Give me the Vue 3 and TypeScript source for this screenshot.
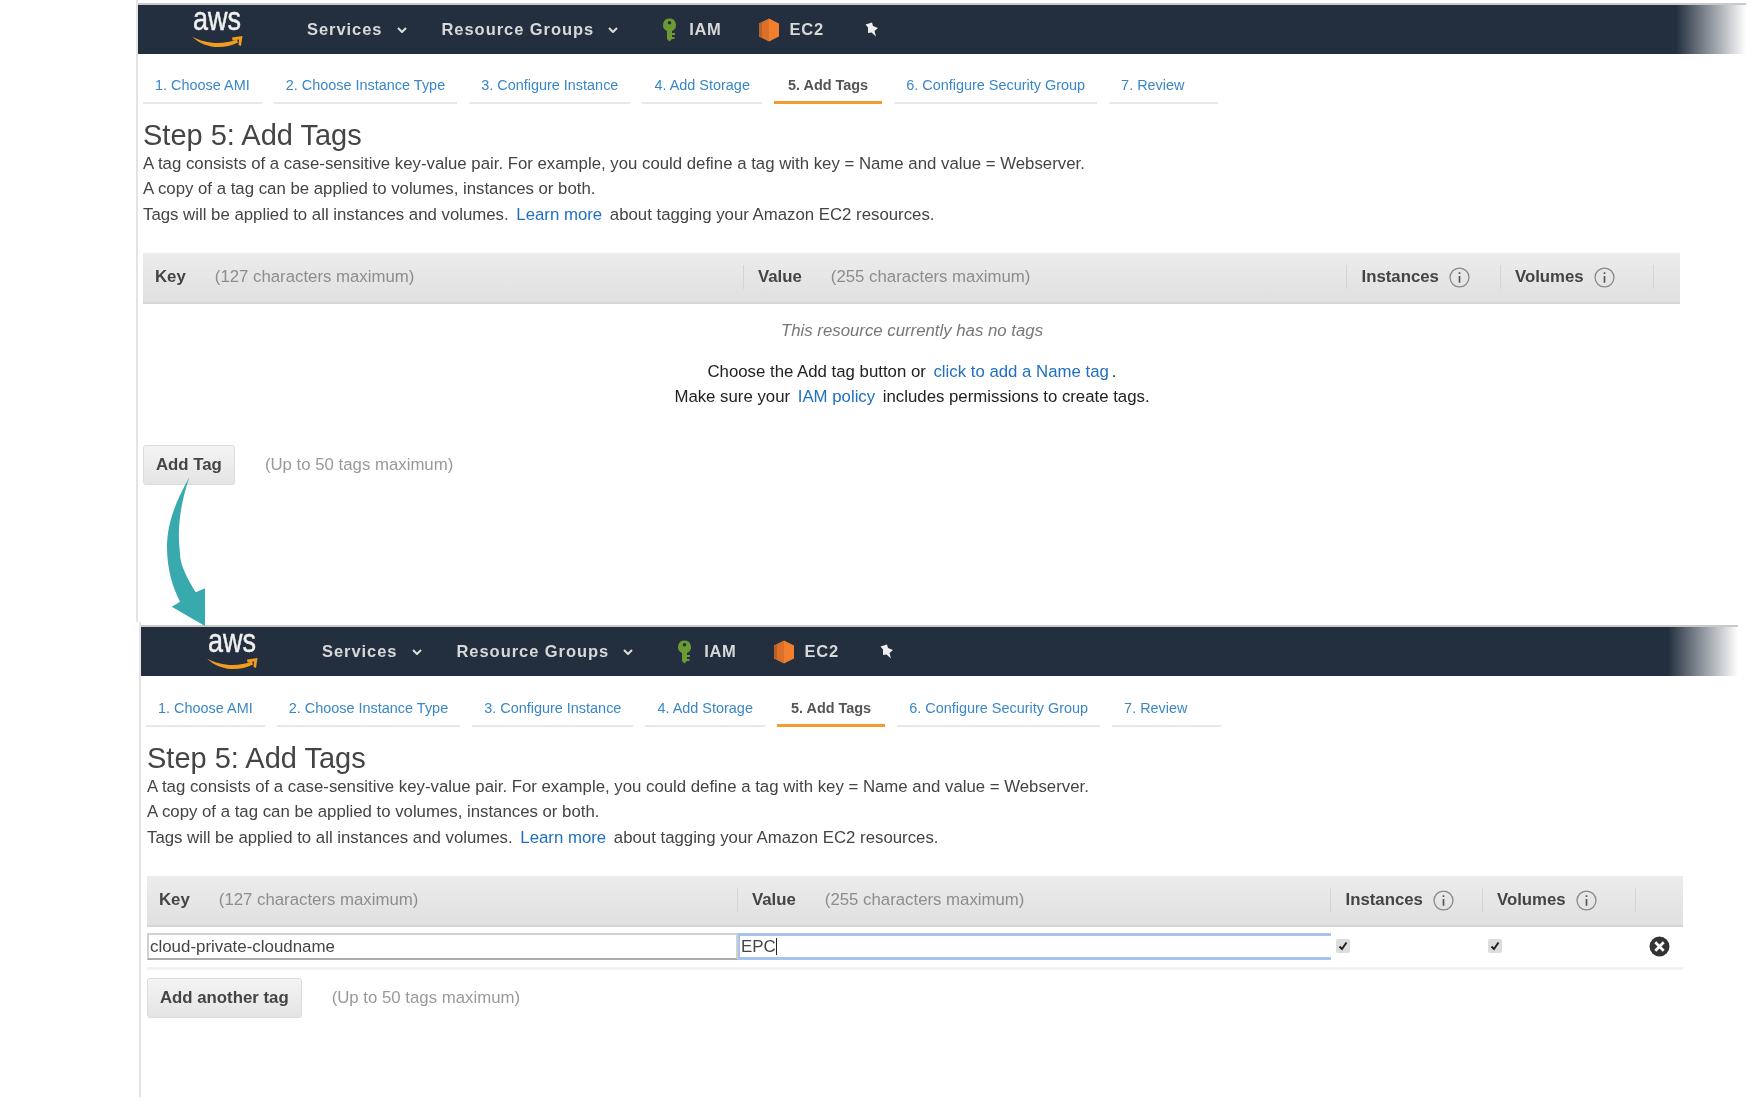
<script setup lang="ts">
const tabs = [
  '1. Choose AMI',
  '2. Choose Instance Type',
  '3. Configure Instance',
  '4. Add Storage',
  '5. Add Tags',
  '6. Configure Security Group',
  '7. Review',
]
const panels = ['first', 'second']
</script>

<template>
  <div class="page">
    <section v-for="p in panels" :key="p" class="panel" :class="p">
      <header class="nav">
        <div class="logo">
          <span class="aws">aws</span>
          <svg class="smile" viewBox="0 0 52 13" width="52" height="13">
            <path d="M0 0.5C13 8 31 9 45 3.5L46 6.5C31 14 12 12.5 0 0.5Z" fill="#f29c1f" />
            <path d="M40 1.5L50.5 0L49 10L46.5 9L47 3.5L40.5 4.5Z" fill="#f29c1f" />
          </svg>
        </div>
        <span class="nav-item services">Services</span>
        <svg class="chev" viewBox="0 0 10 6" width="10" height="6"><path d="M1 1L5 5L9 1" fill="none" stroke="#ddd" stroke-width="2" /></svg>
        <span class="nav-item groups">Resource Groups</span>
        <svg class="chev" viewBox="0 0 10 6" width="10" height="6"><path d="M1 1L5 5L9 1" fill="none" stroke="#ddd" stroke-width="2" /></svg>
        <svg class="key" viewBox="0 0 15 24" width="15" height="24">
          <path fill-rule="evenodd" d="M7.5 0.5A6.5 6.5 0 0 1 10 13V15H13V17H10V19H12.5V21H10L7.5 23.5L5 21V13A6.5 6.5 0 0 1 7.5 0.5ZM7.5 3A1.8 1.8 0 1 0 7.5 6.6A1.8 1.8 0 1 0 7.5 3Z" fill="#6b9a35" />
        </svg>
        <span class="nav-item iam">IAM</span>
        <svg class="hex" viewBox="0 0 22 24" width="22" height="24">
          <path d="M11 0.5L21 5.5V18.5L11 23.5Z" fill="#f07f2e" />
          <path d="M11 0.5L1 5.5V18.5L11 23.5Z" fill="#dc7029" />
          <path d="M1 5.5L4 4V20L1 18.5Z" fill="#b8602b" />
        </svg>
        <span class="nav-item ec2">EC2</span>
        <svg class="pin" viewBox="0 0 16 17" width="16" height="17">
          <path d="M2.5 3.5L9 1.5L10 5L15 7L11.5 10L13 15.5L8.5 11.5L5 12L5 6.5Z" fill="#eee" />
        </svg>
      </header>

      <nav class="tabs">
        <a v-for="t in tabs" :key="t" class="tab" :class="{ active: t.startsWith('5'), last: t.startsWith('7') }">{{ t }}</a>
      </nav>

      <div class="content">
        <h1>Step 5: Add Tags</h1>
        <p>A tag consists of a case-sensitive key-value pair. For example, you could define a tag with key = Name and value = Webserver.</p>
        <p>A copy of a tag can be applied to volumes, instances or both.</p>
        <p>Tags will be applied to all instances and volumes. <a class="link">Learn more</a> about tagging your Amazon EC2 resources.</p>

        <div class="thead">
          <div class="th key-col"><b>Key</b><span>(127 characters maximum)</span></div>
          <div class="th val-col"><b>Value</b><span>(255 characters maximum)</span></div>
          <div class="th inst-col">
            <b>Instances</b>
            <svg class="info" viewBox="0 0 20 20" width="21" height="21"><circle cx="10" cy="10" r="9" fill="none" stroke="#888" stroke-width="1.2" /><path d="M10 8.5V15M10 5V6.6" stroke="#555" stroke-width="1.6" /></svg>
          </div>
          <div class="th vol-col">
            <b>Volumes</b>
            <svg class="info" viewBox="0 0 20 20" width="21" height="21"><circle cx="10" cy="10" r="9" fill="none" stroke="#888" stroke-width="1.2" /><path d="M10 8.5V15M10 5V6.6" stroke="#555" stroke-width="1.6" /></svg>
          </div>
          <div class="th end-col"></div>
        </div>

        <template v-if="p === 'first'">
          <div class="empty">
            <em>This resource currently has no tags</em>
            <div class="empty-line one">Choose the Add tag button or <a class="link">click to add a Name tag</a>.</div>
            <div class="empty-line">Make sure your <a class="link">IAM policy</a> includes permissions to create tags.</div>
          </div>
          <div class="actions first-actions">
            <button class="btn">Add Tag</button>
            <span class="limit">(Up to 50 tags maximum)</span>
          </div>
        </template>

        <template v-else>
          <div class="row">
            <div class="input plain">cloud-private-cloudname</div>
            <div class="input focus">EPC<i class="caret"></i></div>
            <div class="cell"><span class="check"><svg viewBox="0 0 12 12" width="12" height="12"><path d="M2.5 6.5L5 9L9.5 2.5" fill="none" stroke="#222" stroke-width="2" /></svg></span></div>
            <div class="cell"><span class="check"><svg viewBox="0 0 12 12" width="12" height="12"><path d="M2.5 6.5L5 9L9.5 2.5" fill="none" stroke="#222" stroke-width="2" /></svg></span></div>
            <div class="cell close-cell">
              <svg viewBox="0 0 20 20" width="21" height="21"><circle cx="10" cy="10" r="9.5" fill="#333" /><path d="M6 6L14 14M14 6L6 14" stroke="#fff" stroke-width="2.6" /></svg>
            </div>
          </div>
          <div class="actions second-actions">
            <button class="btn">Add another tag</button>
            <span class="limit">(Up to 50 tags maximum)</span>
          </div>
        </template>
      </div>
    </section>

    <svg class="arrow" viewBox="0 0 50 160" width="50" height="160">
      <path d="M29.3 7.3C15 32 7 55 7 77C7 100 13 118 20 131.7L11.7 136.7L45 156V118.3L35.7 122.3C27 108 20 95 20 83.3C17 60 20 35 29.3 7.3Z" fill="#38a9ac" />
    </svg>
  </div>
</template>

<style>
html, body { margin: 0; background: #fff; }
</style>

<style scoped>
.page {
  position: relative;
  width: 1764px;
  height: 1104px;
  overflow: hidden;
  background: #fff;
  font-family: "Liberation Sans", Arial, sans-serif;
  color: #444;
  filter: blur(0.7px);
}
.panel {
  box-sizing: border-box;
  border-left: 2px solid #e4e4e4;
  padding-top: 3px;
}
.first { height: 622px; margin-left: 136px; }
.second { height: 475px; margin-left: 139px; }

.nav {
  display: flex;
  align-items: center;
  height: 49px;
  margin-right: 18px;
  border-top: 2px solid #c9c9c9;
  color: #ddd;
  background: linear-gradient(to right, #232f3e 0, #232f3e calc(100% - 70px), #fff 100%);
}
.second .nav { margin-right: 26px; }
.logo {
  position: relative;
  width: 50px;
  height: 40px;
  margin-left: 54px;
  margin-right: 65px;
  flex: none;
}
.second .logo { margin-left: 66px; }
.aws {
  position: absolute;
  left: 1px;
  top: -1px;
  font-size: 27px;
  line-height: 27px;
  color: #f0f0f0;
  -webkit-text-stroke: 0.4px #f0f0f0;
  transform: scaleY(1.2);
  transform-origin: 50% 100%;
}
.smile { position: absolute; left: 0; top: 26px; }
.nav-item {
  font-size: 16.5px;
  font-weight: bold;
  letter-spacing: 0.95px;
  color: #d8d8d8;
  white-space: nowrap;
}
.chev { margin-left: 14px; flex: none; }
.groups { margin-left: 35px; }
.key { margin-left: 44px; flex: none; }
.iam { margin-left: 12px; letter-spacing: 0.7px; }
.hex { margin-left: 36px; flex: none; }
.ec2 { margin-left: 10px; letter-spacing: 0.7px; }
.pin { margin-left: 39px; flex: none; }

.tabs {
  display: flex;
  gap: 12px;
  height: 50px;
  margin-left: 5px;
  box-sizing: border-box;
  padding-top: 18px;
}
.second .tabs { padding-top: 19px; }
.tab {
  box-sizing: border-box;
  height: 32px;
  padding: 3px 12px 0;
  border-bottom: 2px solid #e8e8e8;
  font-size: 14.45px;
  line-height: 20px;
  color: #3a87c8;
  white-space: nowrap;
}
.tab.active {
  padding: 3px 14px 0;
  border-bottom: 3px solid #f59a32;
  color: #555;
  font-weight: bold;
}
.tab.last { padding-right: 33px; }

.content { margin-left: 5px; }
.second .content { margin-left: 6px; }
h1 {
  margin: 15.5px 0 0;
  font-size: 29px;
  font-weight: normal;
  line-height: 31.5px;
  color: #444;
}
.second h1 { margin-top: 17px; line-height: 31px; }
p {
  margin: 0;
  font-size: 16.8px;
  line-height: 25.3px;
  color: #444;
}
.link { color: #1f6fc2; margin: 0 3px; }

.thead {
  display: grid;
  align-items: center;
  height: 51px;
  margin-top: 26px;
  background: linear-gradient(#ececec, #e0e0e0);
  border-bottom: 2px solid #d6d6d6;
  box-sizing: border-box;
  font-size: 16.8px;
}
.first .thead {
  width: 1537px;
  grid-template-columns: 601px 603px 154px 153px 26px;
}
.second .thead {
  width: 1536px;
  margin-top: 26px;
  grid-template-columns: 591px 593px 152px 153px 47px;
}
.th {
  display: flex;
  align-items: center;
  box-sizing: border-box;
  height: 24px;
  padding-left: 14px;
  border-right: 1px solid #d4d4d4;
  white-space: nowrap;
}
.th b { color: #444; }
.th span { margin-left: 29px; color: #8d8d8d; }
.key-col { padding-left: 12px; }
.inst-col { padding-left: 14.5px; }
.end-col { border-right: none; }
.info { margin-left: 10px; flex: none; }

.empty { text-align: center; font-size: 16.8px; width: 1538px; color: #222; padding-top: 14px; }
.empty em { display: block; color: #777; line-height: 25px; }
.empty-line { line-height: 25px; }
.empty-line.one { margin-top: 16px; }

.actions { display: flex; align-items: center; }
.first-actions { margin-top: 36px; }
.second-actions { margin-top: 8px; }
.btn {
  box-sizing: border-box;
  height: 40px;
  padding: 0 12px;
  font: bold 16.8px "Liberation Sans", Arial, sans-serif;
  color: #444;
  background: linear-gradient(#f4f4f4, #e4e4e4);
  border: 1px solid #dcdcdc;
  border-radius: 3px;
}
.limit { margin-left: 30px; font-size: 16.8px; color: #999; }

.row {
  display: grid;
  grid-template-columns: 591px 593px 152px 153px 47px;
  align-items: center;
  width: 1536px;
  height: 43px;
  border-bottom: 3px solid #f2f2f2;
  box-sizing: border-box;
}
.input {
  box-sizing: border-box;
  height: 27px;
  padding-left: 1px;
  font-size: 16.9px;
  line-height: 24px;
  background: #fff;
  color: #444;
}
.plain { border: 2px solid #d0d0d0; border-bottom-color: #aaa; }
.focus { border: 3px solid #a7c3ee; border-left-width: 2px; border-right: none; line-height: 22px; }
.caret { display: inline-block; width: 1px; height: 17px; background: #222; vertical-align: -3px; }
.cell { display: flex; padding-left: 5px; }
.check {
  display: flex;
  align-items: center;
  justify-content: center;
  width: 14px;
  height: 14px;
  background: #ddd;
  border-radius: 2px;
  margin-top: -2px;
}
.close-cell { justify-content: flex-end; padding-right: 13px; }

.arrow { position: absolute; left: 160px; top: 470px; }
</style>
